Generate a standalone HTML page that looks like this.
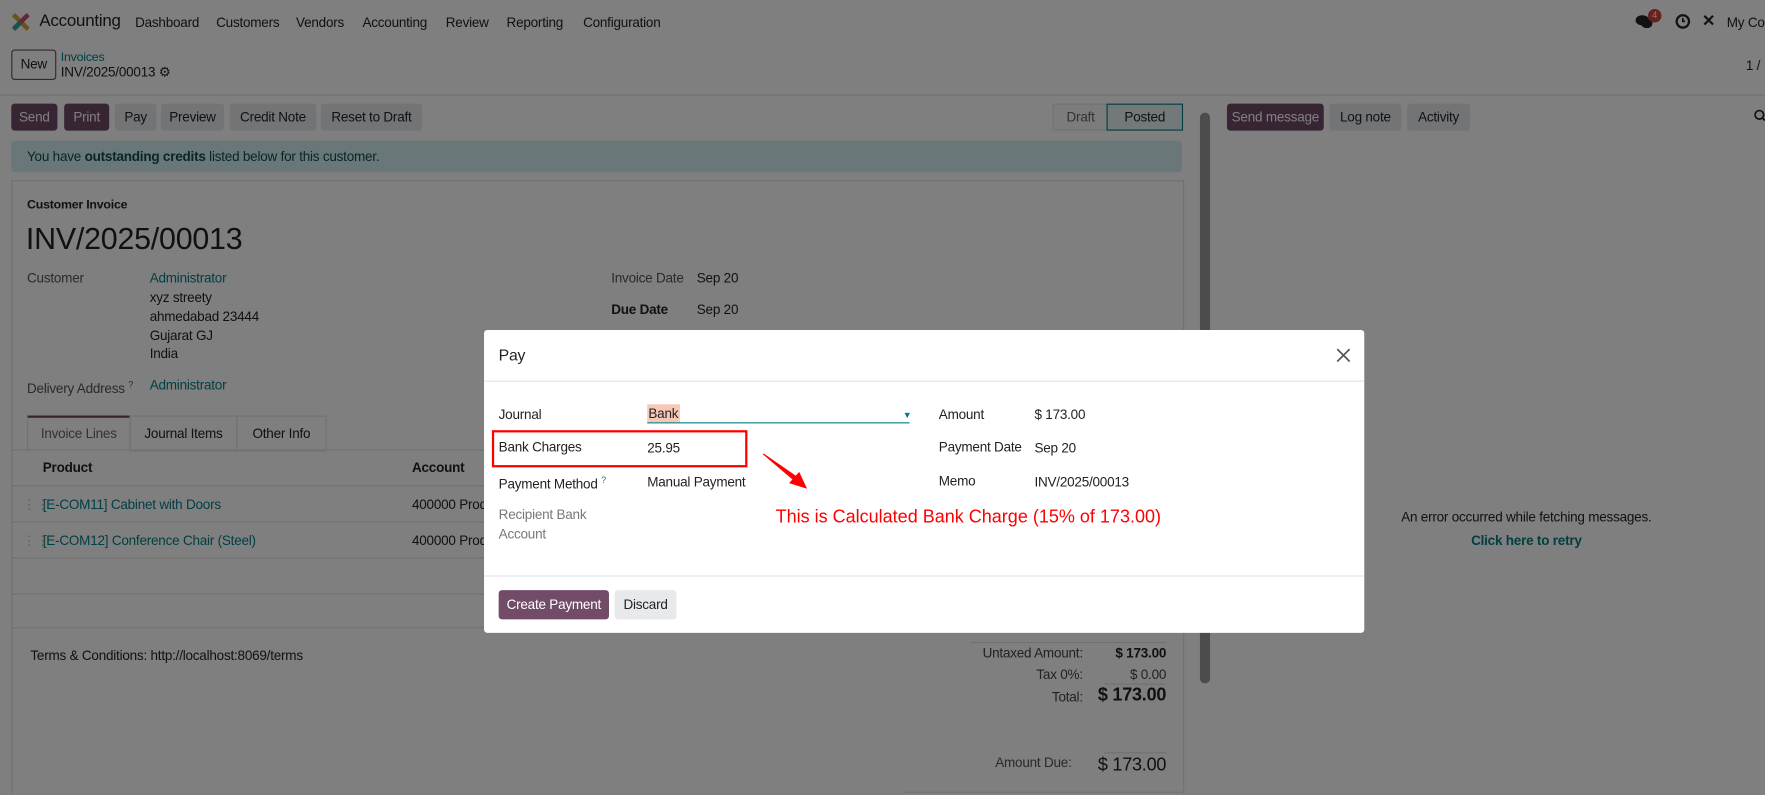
<!DOCTYPE html>
<html><head><meta charset="utf-8"><style>
html,body{margin:0;padding:0;width:1765px;height:795px;overflow:hidden;background:#7f7f7f;}
#w{position:absolute;left:0;top:0;width:1568px;height:706px;overflow:hidden;transform:scale(1.12564,1.1261);transform-origin:0 0;font-family:"Liberation Sans",sans-serif;font-size:12px;letter-spacing:-0.2px;color:#222;background:#fff;}
.a{position:absolute;white-space:nowrap;line-height:16px;}
.btn{position:absolute;height:24px;line-height:24px;text-align:center;border-radius:3px;background:#e7e9ed;color:#222;font-size:12px;}
.pri{background:#714b67;color:#fff;}
.teal{color:#017e84;}
.ln{position:absolute;height:1px;background:#dee2e6;}
#ov{position:absolute;left:0;top:0;width:1568px;height:706px;background:rgba(0,0,0,0.5);}
</style></head><body><div id="w">
<svg class="a" style="left:10px;top:11px" width="17" height="17" viewBox="0 0 17 17"><path d="M2 2 L15 15" stroke="#c9a93a" stroke-width="4"/><path d="M15 2 L2 15" stroke="#d04b6a" stroke-width="4"/><path d="M2 15 L8 9" stroke="#2ea59d" stroke-width="4"/></svg>
<div class="a" style="left:35px;top:11px;font-size:15px">Accounting</div>
<div class="a" style="left:120px;top:12px">Dashboard</div>
<div class="a" style="left:192px;top:12px">Customers</div>
<div class="a" style="left:263px;top:12px">Vendors</div>
<div class="a" style="left:322px;top:12px">Accounting</div>
<div class="a" style="left:396px;top:12px">Review</div>
<div class="a" style="left:450px;top:12px">Reporting</div>
<div class="a" style="left:518px;top:12px">Configuration</div>
<svg class="a" style="left:1453px;top:12px" width="16" height="14"><ellipse cx="6" cy="6" rx="6" ry="4.5" fill="#222"/><ellipse cx="10" cy="9" rx="5" ry="4" fill="#222"/></svg>
<div class="a" style="left:1464px;top:8px;width:12px;height:12px;border-radius:6px;background:#d23f3a;color:#fff;font-size:8px;line-height:12px;text-align:center">4</div>
<svg class="a" style="left:1488px;top:12px" width="14" height="14"><circle cx="7" cy="7" r="5.5" fill="none" stroke="#222" stroke-width="2"/><path d="M7 4V7H9" stroke="#222" stroke-width="1.5" fill="none"/></svg>
<div class="a" style="left:1512px;top:10px;font-size:14px;font-weight:bold">&#10005;</div>
<div class="a" style="left:1534px;top:12px">My Co</div>
<div class="a" style="left:10px;top:44px;width:38px;height:25px;border:1px solid #714b67;border-radius:3px;text-align:center;line-height:25px">New</div>
<div class="a teal" style="left:54px;top:43px;font-size:11px">Invoices</div>
<div class="a" style="left:54px;top:56px">INV/2025/00013 &#9881;</div>
<div class="a" style="left:1551px;top:50px">1 /</div>
<div class="ln" style="left:0;top:84px;width:1568px"></div>
<div class="btn pri" style="left:10px;top:92px;width:41px">Send</div>
<div class="btn pri" style="left:57px;top:92px;width:40px">Print</div>
<div class="btn" style="left:102px;top:92px;width:37px">Pay</div>
<div class="btn" style="left:143px;top:92px;width:56px">Preview</div>
<div class="btn" style="left:204px;top:92px;width:77px">Credit Note</div>
<div class="btn" style="left:285px;top:92px;width:90px">Reset to Draft</div>
<div class="a" style="left:935px;top:92px;width:48px;height:22px;border:1px solid #dee2e6;background:#f8f9fa;color:#666;text-align:center;line-height:22px">Draft</div>
<div class="a" style="left:983px;top:92px;width:66px;height:22px;border:1px solid #017e84;background:#e6f2f3;text-align:center;line-height:22px">Posted</div>
<div class="a" style="left:1066px;top:100px;width:9px;height:507px;border-radius:5px;background:#999"></div>
<div class="btn pri" style="left:1090px;top:92px;width:86px">Send message</div>
<div class="btn" style="left:1181px;top:92px;width:64px">Log note</div>
<div class="btn" style="left:1250px;top:92px;width:56px">Activity</div>
<svg class="a" style="left:1558px;top:97px" width="10" height="12"><circle cx="5" cy="5" r="3.8" fill="none" stroke="#222" stroke-width="1.5"/><path d="M8 8L10 10" stroke="#222" stroke-width="1.5"/></svg>
<div class="a" style="left:10px;top:125px;width:1040px;height:28px;background:#d3eef0;border-radius:3px"></div>
<div class="a" style="left:24px;top:131px;color:#0c4d50">You have <b>outstanding credits</b> listed below for this customer.</div>
<div class="a" style="left:10px;top:160px;width:1040px;height:545px;border:1px solid #dee2e6;border-bottom:none;background:#fff"></div>
<div class="a" style="left:24px;top:174px;font-weight:bold;font-size:11px">Customer Invoice</div>
<div class="a" style="left:23px;top:196px;font-size:27px;line-height:32px">INV/2025/00013</div>
<div class="a" style="left:24px;top:239px;color:#555">Customer</div>
<div class="a teal" style="left:133px;top:239px">Administrator</div>
<div class="a" style="left:133px;top:256px">xyz streety</div>
<div class="a" style="left:133px;top:273px">ahmedabad 23444</div>
<div class="a" style="left:133px;top:290px">Gujarat GJ</div>
<div class="a" style="left:133px;top:306px">India</div>
<div class="a" style="left:24px;top:334px;color:#555">Delivery Address <sup style="font-size:8px">?</sup></div>
<div class="a teal" style="left:133px;top:334px">Administrator</div>
<div class="a" style="left:543px;top:239px;color:#555">Invoice Date</div>
<div class="a" style="left:619px;top:239px">Sep 20</div>
<div class="a" style="left:543px;top:267px;font-weight:bold">Due Date</div>
<div class="a" style="left:619px;top:267px">Sep 20</div>
<div class="a" style="left:24px;top:369px;width:90px;height:30px;border:1px solid #dee2e6;border-top:2px solid #714b67;border-bottom:none;color:#666;text-align:center;line-height:28px">Invoice Lines</div>
<div class="a" style="left:115px;top:369px;width:94px;height:30px;border:1px solid #dee2e6;text-align:center;line-height:30px">Journal Items</div>
<div class="a" style="left:210px;top:369px;width:78px;height:30px;border:1px solid #dee2e6;text-align:center;line-height:30px">Other Info</div>
<div class="ln" style="left:10px;top:399px;width:1040px"></div>
<div class="a" style="left:38px;top:407px;font-weight:bold">Product</div>
<div class="a" style="left:366px;top:407px;font-weight:bold">Account</div>
<div class="ln" style="left:10px;top:431px;width:1040px"></div>
<div class="a" style="left:20px;top:440px;color:#bbb">&#8942;&#8942;</div>
<div class="a teal" style="left:38px;top:440px">[E-COM11] Cabinet with Doors</div>
<div class="a" style="left:366px;top:440px">400000 Product Sales</div>
<div class="ln" style="left:10px;top:463px;width:1040px"></div>
<div class="a" style="left:20px;top:472px;color:#bbb">&#8942;&#8942;</div>
<div class="a teal" style="left:38px;top:472px">[E-COM12] Conference Chair (Steel)</div>
<div class="a" style="left:366px;top:472px">400000 Product Sales</div>
<div class="ln" style="left:10px;top:495px;width:1040px"></div>
<div class="ln" style="left:10px;top:527px;width:1040px"></div>
<div class="ln" style="left:10px;top:557px;width:1040px"></div>
<div class="a" style="left:27px;top:574px">Terms &amp; Conditions: http://localhost:8069/terms</div>
<div class="ln" style="left:862px;top:570px;width:174px"></div>
<div class="a" style="left:762px;width:200px;text-align:right;top:572px;color:#444">Untaxed Amount:</div>
<div class="a" style="left:936px;width:100px;text-align:right;top:572px;font-weight:bold">$ 173.00</div>
<div class="a" style="left:762px;width:200px;text-align:right;top:591px;color:#444">Tax 0%:</div>
<div class="a" style="left:936px;width:100px;text-align:right;top:591px;color:#444">$ 0.00</div>
<div class="ln" style="left:981px;top:607px;width:55px"></div>
<div class="a" style="left:762px;width:200px;text-align:right;top:611px;color:#444">Total:</div>
<div class="a" style="left:896px;width:140px;text-align:right;top:608px;font-weight:bold;font-size:16px;line-height:20px">$ 173.00</div>
<div class="ln" style="left:981px;top:668px;width:55px"></div>
<div class="a" style="left:752px;width:200px;text-align:right;top:669px;color:#555">Amount Due:</div>
<div class="a" style="left:896px;width:140px;text-align:right;top:670px;font-size:16px;line-height:20px">$ 173.00</div>
<div class="ln" style="left:803px;top:703px;width:247px"></div>
<div class="a" style="left:1206px;width:300px;text-align:center;top:451px">An error occurred while fetching messages.</div>
<div class="a teal" style="left:1206px;width:300px;text-align:center;top:472px;font-weight:bold">Click here to retry</div>
<div id="ov"></div>
<div class="a" style="left:430px;top:293px;width:782px;height:269px;background:#fff;border-radius:3px"></div>
<div class="a" style="left:443px;top:307px;font-size:14px">Pay</div>
<svg class="a" style="left:1187px;top:309px" width="13" height="13"><path d="M1 1L12 12M12 1L1 12" stroke="#555" stroke-width="1.5"/></svg>
<div class="ln" style="left:430px;top:338px;width:782px"></div>
<div class="a" style="left:443px;top:360px">Journal</div>
<div class="a" style="left:575px;top:359px;background:#f6c8b5;padding:0 1px">Bank</div>
<div class="a" style="left:575px;top:375px;width:233px;height:1px;background:#017e84"></div>
<div class="a" style="left:802px;top:361px;font-size:8px;color:#017e84">&#9660;</div>
<div class="a" style="left:834px;top:360px">Amount</div>
<div class="a" style="left:919px;top:360px">$ 173.00</div>
<div class="a" style="left:437px;top:382px;width:223px;height:29px;border:2px solid #f00"></div>
<div class="a" style="left:443px;top:389px">Bank Charges</div>
<div class="a" style="left:575px;top:390px">25.95</div>
<div class="a" style="left:834px;top:389px">Payment Date</div>
<div class="a" style="left:919px;top:390px">Sep 20</div>
<div class="a" style="left:443px;top:419px">Payment Method <sup style="font-size:8px;color:#017e84">?</sup></div>
<div class="a" style="left:575px;top:420px">Manual Payment</div>
<div class="a" style="left:834px;top:419px">Memo</div>
<div class="a" style="left:919px;top:420px">INV/2025/00013</div>
<div class="a" style="left:443px;top:449px;color:#777">Recipient Bank</div>
<div class="a" style="left:443px;top:466px;color:#777">Account</div>
<svg class="a" style="left:675px;top:400px" width="45" height="36"><path d="M3 3 L30 26 L32 23 Z" fill="#f00" stroke="#f00" stroke-width="1"/><path d="M42 34 L26 29 L35 19 Z" fill="#f00"/></svg>
<div class="a" style="left:689px;top:450px;color:#f00;font-size:16px;line-height:20px;letter-spacing:0">This is Calculated Bank Charge (15% of 173.00)</div>
<div class="ln" style="left:430px;top:511px;width:782px"></div>
<div class="btn pri" style="left:443px;top:524px;width:98px;height:26px;line-height:26px">Create Payment</div>
<div class="btn" style="left:546px;top:524px;width:55px;height:26px;line-height:26px">Discard</div>
</div></body></html>
